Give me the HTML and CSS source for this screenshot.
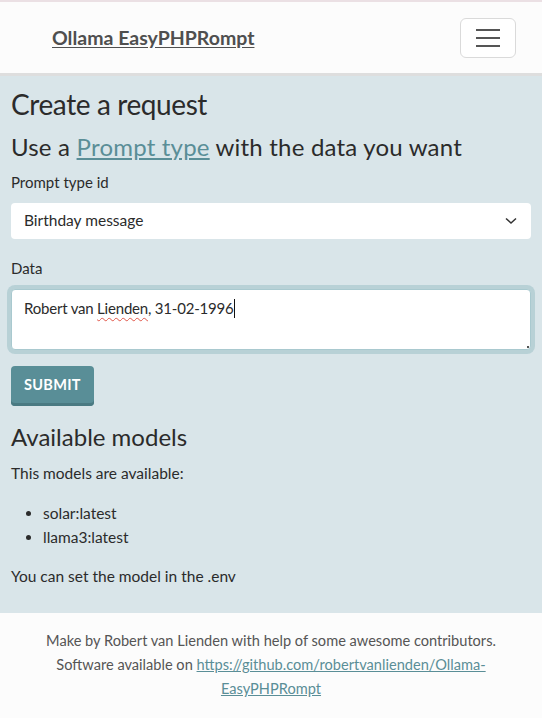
FILE: index.html
```html
<!DOCTYPE html>
<html lang="en">
<head>
<meta charset="utf-8">
<title>Ollama EasyPHPRompt</title>
<link rel="stylesheet" href="styles.css">
</head>
<body>
<div class="topline"></div>
<nav class="navbar">
  <a class="brand" href="#">Ollama EasyPHPRompt</a>
  <button class="toggler" type="button" aria-label="Toggle navigation">
    <span class="bar"></span><span class="bar"></span><span class="bar"></span>
  </button>
</nav>
<main class="main">
  <h1 class="title">Create a request</h1>
  <h2 class="subtitle">Use a <a href="#" class="link">Prompt type</a> with the data you want</h2>
  <form class="form">
    <label class="label">Prompt type id</label>
    <div class="select">
      <span>Birthday message</span>
      <svg class="chev" width="12" height="8" viewBox="0 0 12 8"><path d="M1 1.5 L6 6 L11 1.5" fill="none" stroke="#333" stroke-width="1.5"/></svg>
    </div>
    <label class="label label-data">Data</label>
    <div class="textarea" role="textbox">Robert van <span class="spell">Lienden</span>, 31-02-1996<span class="caret"></span><span class="grip"></span></div>
    <button class="submit" type="button">Submit</button>
  </form>
  <h3 class="section">Available models</h3>
  <p class="text">This models are available:</p>
  <ul class="list">
    <li>solar:latest</li>
    <li>llama3:latest</li>
  </ul>
  <p class="text">You can set the model in the .env</p>
</main>
<footer class="footer">
  <p>Make by Robert van Lienden with help of some awesome contributors.<br>
  Software available on <a href="#" class="link">https://github.com/robertvanlienden/Ollama-EasyPHPRompt</a></p>
</footer>
</body>
</html>
```
FILE: styles.css
```css
* { box-sizing: border-box; }
html, body { margin: 0; padding: 0; }
body {
  font-family: Lato, "Open Sans", sans-serif;
  font-size: 16px;
  line-height: 1.5;
  color: #2b2b2b;
  background: #fcfcfc;
}
.topline { height: 2px; background: #ebe0e4; }
.navbar {
  display: flex;
  align-items: center;
  justify-content: space-between;
  height: 74px;
  padding: 0 26px 0 52px;
  background: #fcfcfc;
  border-bottom: 3px solid #dedede;
}
.brand {
  font-size: 19.5px;
  font-weight: 700;
  color: #4f4f4f;
  text-decoration: underline;
  text-underline-offset: 2px;
  letter-spacing: 0;
}
.toggler {
  width: 56px;
  height: 40px;
  background: #fff;
  border: 1px solid #dadada;
  border-radius: 6px;
  display: flex;
  flex-direction: column;
  align-items: center;
  justify-content: center;
  gap: 6px;
  padding: 0;
}
.bar { display: block; width: 24px; height: 2px; background: #555; }
.main { padding: 12px 11px 25px; background: #d9e5e9; }
.title {
  margin: 0;
  font-size: 28px;
  font-weight: 400;
  line-height: 1.2;
  letter-spacing: -0.4px;
}
.subtitle {
  margin: 11px 0 0;
  font-size: 24px;
  font-weight: 400;
  line-height: 1.2;
  letter-spacing: 0.2px;
}
.link { color: #5a8e97; text-decoration: underline; }
.form { display: flex; flex-direction: column; align-items: stretch; }
.label { display: block; font-size: 15px; margin-top: 10px; }
.label-data { margin-top: 18px; }
.select {
  margin-top: 9px;
  height: 36px;
  background: #fff;
  border-radius: 4px;
  display: flex;
  align-items: center;
  justify-content: space-between;
  padding: 0 14px 0 13px;
  font-size: 15.5px;
}
.chev { display: block; }
.textarea {
  position: relative;
  margin-top: 10px;
  height: 61px;
  background: #fff;
  border: 1px solid #a9c9cf;
  border-radius: 4px;
  box-shadow: 0 0 0 4px #b8d1d6;
  padding: 7px 12px;
  font-size: 15px;
  letter-spacing: -0.2px;
}
.spell { text-decoration: underline wavy #e0564a; text-decoration-thickness: 1px; text-underline-offset: 3px; }
.caret { display: inline-block; width: 1px; height: 19px; background: #111; vertical-align: -4px; }
.grip {
  position: absolute;
  right: 1px;
  bottom: 1px;
  width: 2px;
  height: 2px;
  background: #555;
}
.submit {
  margin-top: 16px;
  align-self: flex-start;
  height: 40px;
  padding: 0 13px 3px;
  background: #598e97;
  color: #fff;
  border: 0;
  border-radius: 4px;
  box-shadow: inset 0 -3px 0 #4a7a82;
  font-family: inherit;
  font-size: 14.5px;
  font-weight: 700;
  text-transform: uppercase;
  letter-spacing: 0.3px;
}
.section {
  margin: 17px 0 0;
  font-size: 24px;
  font-weight: 400;
  line-height: 1.2;
  letter-spacing: 0;
}
.text { margin: 10px 0 0; font-size: 15.5px; }
.list { margin: 17px 0 16px; padding-left: 32px; font-size: 15.5px; }
.list + .text { margin-top: 0; }
.footer {
  background: #fcfcfc;
  padding: 16px 16px 12px;
  text-align: center;
  color: #555;
  font-size: 14.6px;
  line-height: 24px;
}
.footer p { margin: 0; }
```
